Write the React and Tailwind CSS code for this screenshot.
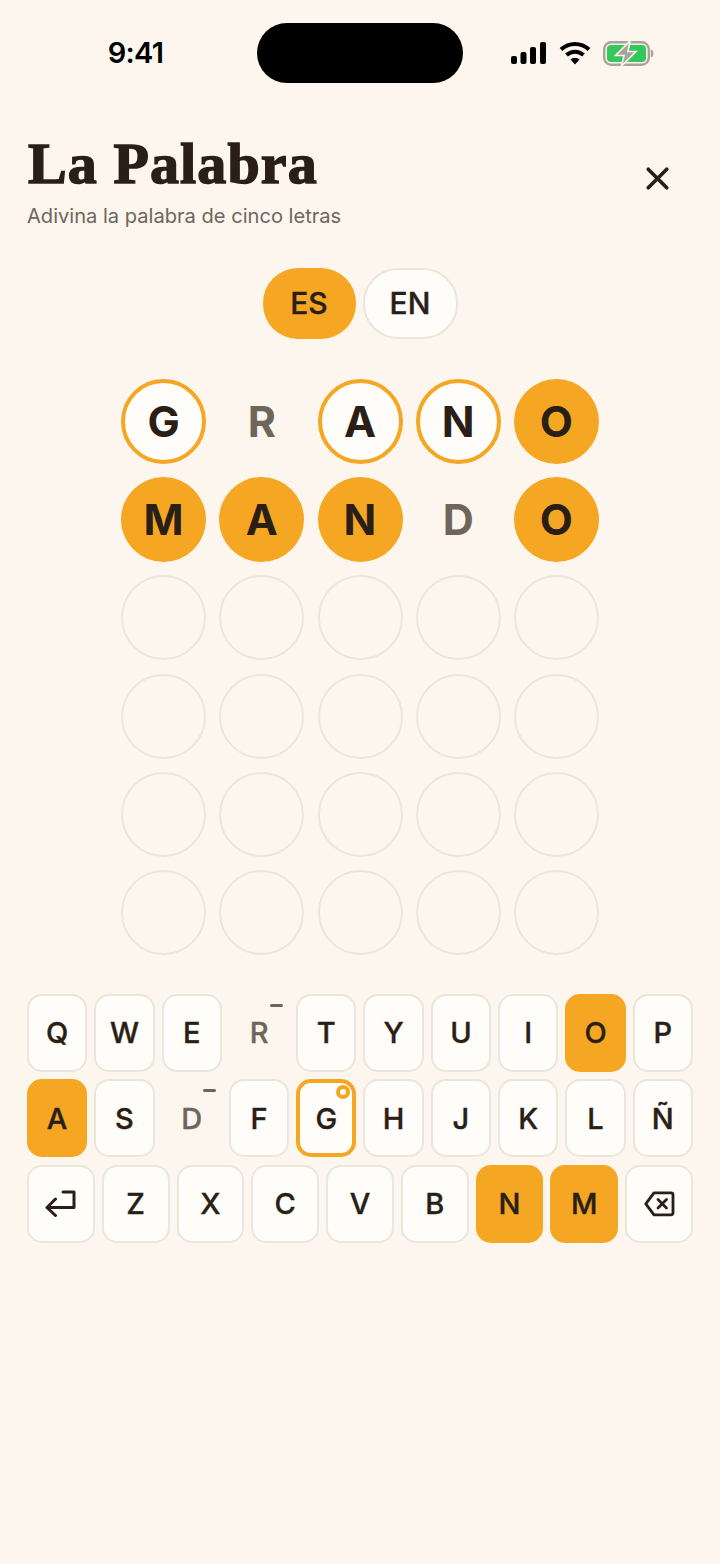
import { X } from "lucide-react";

const INTER = "font-['Inter',sans-serif]";

const GUESSES = [
  [["G", "near"], ["R", "miss"], ["A", "near"], ["N", "near"], ["O", "hit"]],
  [["M", "hit"], ["A", "hit"], ["N", "hit"], ["D", "miss"], ["O", "hit"]],
];

const circleStyle = {
  near: "bg-[#fffdf9] border-4 border-[#f5a623] text-[#2a1f17]",
  hit: "bg-[#f5a623] text-[#2a1f17]",
  miss: "text-[#6e655c]",
  empty: "border-2 border-[#ebe6db]",
};

const ROWS = [
  ["Q", "W", "E", "R", "T", "Y", "U", "I", "O", "P"],
  ["A", "S", "D", "F", "G", "H", "J", "K", "L", "Ñ"],
  ["enter", "Z", "X", "C", "V", "B", "N", "M", "back"],
];

const HIT_KEYS = ["O", "A", "N", "M"];
const MISS_KEYS = ["R", "D"];

function Signal() {
  return (
    <svg width="37" height="22" viewBox="0 0 37 22" fill="#000">
      <rect x="1" y="14" width="6" height="8" rx="2" />
      <rect x="10.500" y="10" width="6" height="12" rx="2" />
      <rect x="20" y="5" width="6" height="17" rx="2" />
      <rect x="30" y="0" width="6" height="22" rx="2" />
    </svg>
  );
}

function Wifi() {
  return (
    <svg width="32" height="24" viewBox="0 0 32 24" fill="none" stroke="#000" strokeWidth="4">
      <path d="M2 8.500C10 1 22 1 30 8.500" />
      <path d="M7.500 14C12.500 9.500 19.500 9.500 24.500 14" />
      <path d="M16 23.500L11.500 18.500C14 16.600 18 16.600 20.500 18.500Z" fill="#000" stroke="none" />
    </svg>
  );
}

function Battery() {
  return (
    <svg width="51" height="25" viewBox="0 0 51 25" fill="none">
      <rect x="1.200" y="1.200" width="44.600" height="22.600" rx="7" stroke="#a8a49c" strokeWidth="2.400" />
      <rect x="4" y="4" width="39" height="17" rx="4" fill="#34c759" />
      <path d="M47.800 8.500c2 .5 2.600 2 2.600 4s-.6 3.500-2.600 4z" fill="#a8a49c" />
      <path d="M27 0 12.500 14.500H21L18.500 25 33 10.500H25Z" fill="#a8a49c" stroke="#fdf6ee" strokeWidth="1.600" />
    </svg>
  );
}

function EnterIcon() {
  return (
    <svg width="31" height="27" viewBox="0 0 31 27" fill="none" stroke="#2a1f17" strokeWidth="3" strokeLinecap="round" strokeLinejoin="round">
      <path d="M18 2h11v15.500H2.500" />
      <path d="M10.500 9 2 17.500 10.500 25.500" />
    </svg>
  );
}

function BackIcon() {
  return (
    <svg width="31" height="26" viewBox="0 0 31 26" fill="none" stroke="#2a1f17" strokeWidth="2.800" strokeLinecap="round" strokeLinejoin="round">
      <path d="M10 1.800h17c1.200 0 2 .8 2 2v18c0 1.200-.8 2-2 2H10L1.800 12.800Z" />
      <path d="M14 8.500l8.500 8.500M22.500 8.500 14 17" />
    </svg>
  );
}

function Key({ k }) {
  const hit = HIT_KEYS.includes(k);
  const miss = MISS_KEYS.includes(k);
  const near = k === "G";
  let look = "bg-[#fffdf9] border-2 border-[#ebe6db] text-[#2a1f17]";
  if (hit) look = "bg-[#f5a623] text-[#2a1f17]";
  if (miss) look = "text-[#6e655c]";
  if (near) look = "bg-[#fffdf9] border-4 border-[#f5a623] text-[#2a1f17]";

  return (
    <div className={`relative h-[78px] rounded-[15px] flex items-center justify-center text-[29px] font-medium [-webkit-text-stroke:0.4px] ${look}`}>
      {k === "enter" ? <EnterIcon /> : k === "back" ? <BackIcon /> : k}
      {miss && <span className="absolute top-[10px] right-[6px] w-[13px] h-[3px] rounded-full bg-[#6e655c]" />}
      {near && <span className="absolute top-[2px] right-[2px] w-[14px] h-[14px] rounded-full bg-[#fffdf9] border-4 border-[#f5a623]" />}
    </div>
  );
}

function Circle({ letter, state }) {
  return (
    <div className={`w-[85px] h-[85px] rounded-full flex items-center justify-center text-[43px] font-bold ${circleStyle[state]}`}>
      {letter}
    </div>
  );
}

export default function App() {
  const rows = [...GUESSES];
  while (rows.length < 6) rows.push([["", "empty"], ["", "empty"], ["", "empty"], ["", "empty"], ["", "empty"]]);

  return (
    <div className={`${INTER} min-h-[1564px] bg-[#fdf6ee] text-[#2a1f17]`}>
      {/* status bar */}
      <div className="grid grid-cols-[1fr_206px_1fr] items-center pt-[23px] h-[83px]">
        <div className="text-[29px] font-semibold text-black text-center pl-[14px] tracking-tight">
          9:41
        </div>
        <div className="h-[60px] bg-black rounded-[30px]" />
        <div className="flex items-center justify-end gap-[12px] pr-[66px]">
          <Signal />
          <Wifi />
          <Battery />
        </div>
      </div>

      <div className="flex items-start justify-between px-[27px] pt-[50px]">
        <div>
          <h1 className="font-['Liberation_Serif',serif] font-bold text-[58px] leading-[62px] [-webkit-text-stroke:1.500px_#2a1f17] tracking-[1.100px] pl-[1px]">
            La Palabra
          </h1>
          <p className="text-[20.100px] leading-[26px] mt-[8px] text-[#6e655c]">Adivina la palabra de cinco letras</p>
        </div>
        <X className="mt-[27px] mr-[17px]" size={37} strokeWidth={2.400} color="#2a1f17" />
      </div>

      <div className="flex justify-center gap-[7px] mt-[39px]">
        <div className="w-[93px] h-[71px] rounded-[35px] bg-[#f5a623] flex items-center justify-center text-[30px] font-medium [-webkit-text-stroke:0.4px]">ES</div>
        <div className="w-[95px] h-[71px] rounded-[35px] bg-[#fffdf9] border-2 border-[#ebe6db] flex items-center justify-center text-[30px] font-medium [-webkit-text-stroke:0.4px]">EN</div>
      </div>

      <div className="flex flex-col gap-[13.200px] items-center mt-[40px]">
        {rows.map((row, i) => (
          <div key={i} className="flex gap-[13.200px]">
            {row.map(([letter, state], j) => (
              <Circle key={j} letter={letter} state={state} />
            ))}
          </div>
        ))}
      </div>

      <div className="flex flex-col gap-[7.500px] px-[27px] mt-[39px]">
        <div className="grid grid-cols-10 gap-[7px]">
          {ROWS[0].map((k) => <Key key={k} k={k} />)}
        </div>
        <div className="grid grid-cols-10 gap-[7px]">
          {ROWS[1].map((k) => <Key key={k} k={k} />)}
        </div>
        <div className="grid grid-cols-9 gap-[7px]">
          {ROWS[2].map((k) => <Key key={k} k={k} />)}
        </div>
      </div>
    </div>
  );
}
